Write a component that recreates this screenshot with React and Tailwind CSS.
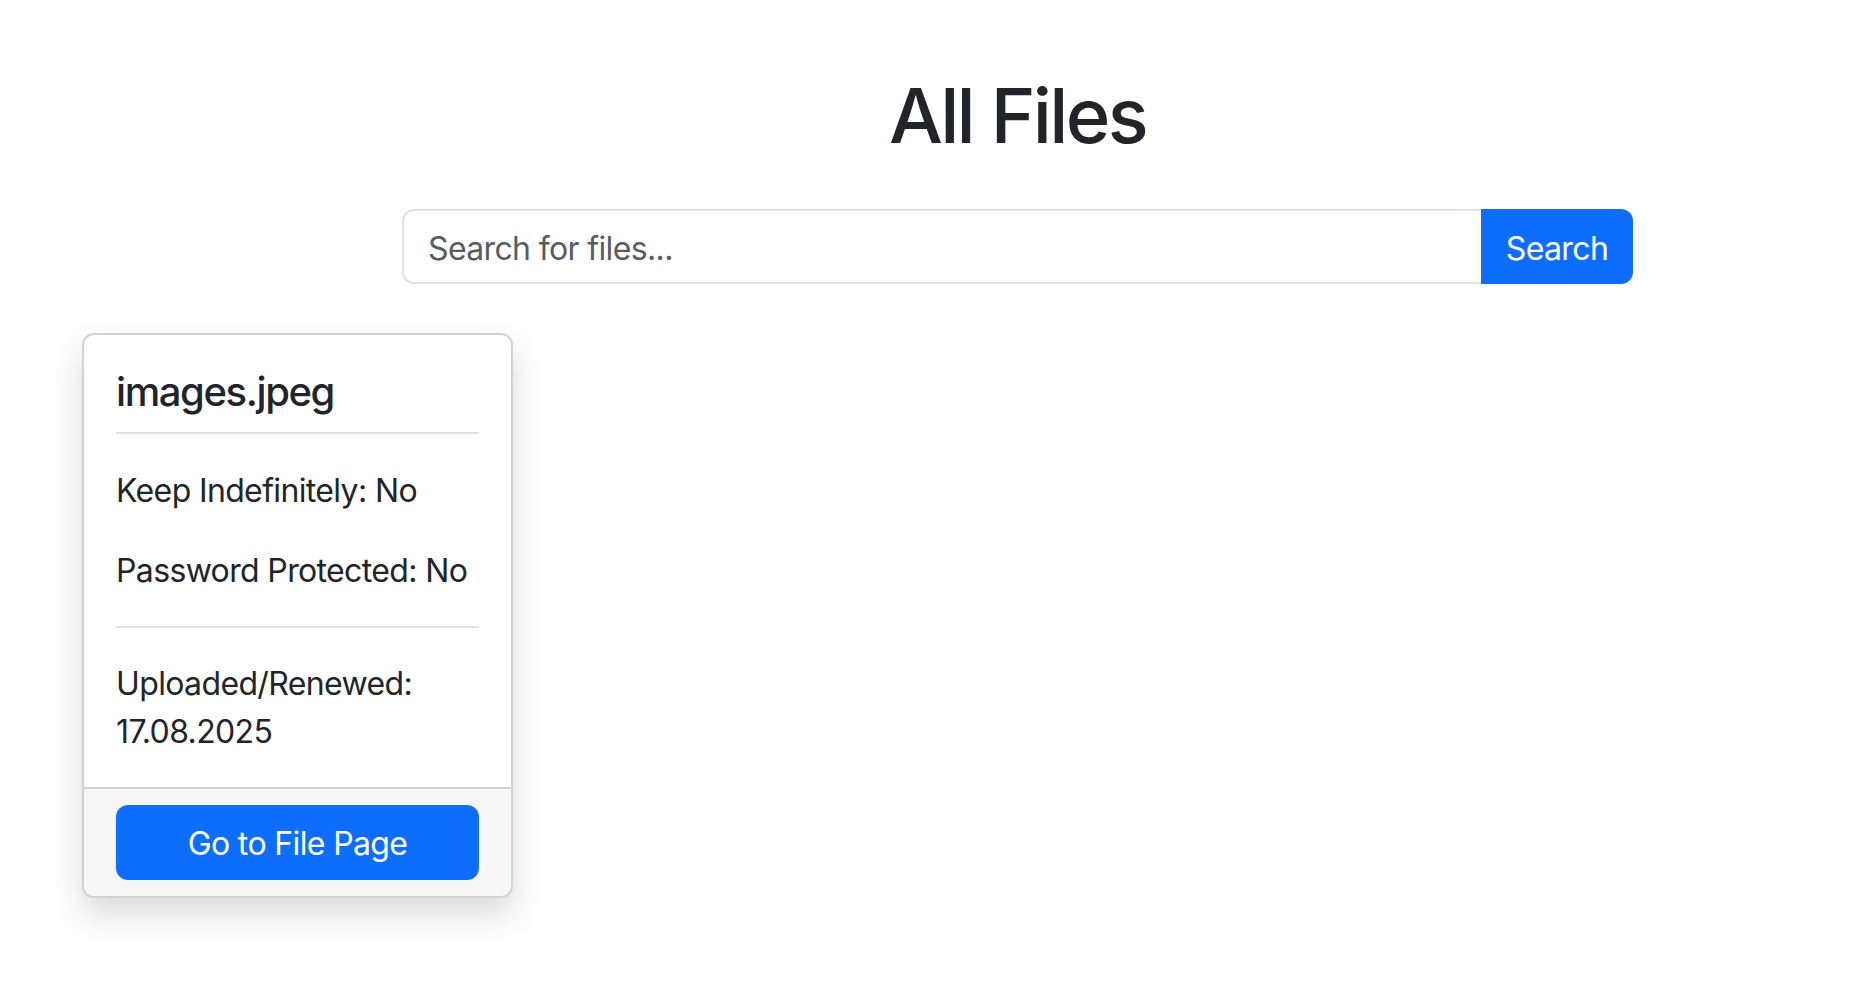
const FONT = { fontFamily: 'Inter, "Noto Sans", sans-serif' };

const FileCard = ({ file }) => (
  <div className="w-[431px] bg-white border-2 border-[#d2d2d2] rounded-[12px] shadow-[0_16px_32px_rgba(0,0,0,0.15)] overflow-hidden">
    <div className="px-[32px] pt-[33px] pb-[31px]">
      <h5 className="text-[40px] leading-[48px] font-medium tracking-[-0.035em] mb-[16px]">{file.name}</h5>
      <hr className="border-0 border-t-2 border-[#dee2e6] mb-[33px]" />
      <p className="text-[32px] leading-[48px] tracking-[-0.02em] whitespace-nowrap mb-[32px]">
        Keep Indefinitely: {file.keep ? 'Yes' : 'No'}
      </p>
      <p className="text-[32px] leading-[48px] tracking-[-0.02em] whitespace-nowrap mb-[31px]">
        Password Protected: {file.password ? 'Yes' : 'No'}
      </p>
      <hr className="border-0 border-t-2 border-[#dee2e6] mb-[32px]" />
      <p className="text-[32px] leading-[48px] tracking-[-0.02em]">Uploaded/Renewed: {file.uploaded}</p>
    </div>
    <div className="bg-[#f7f7f7] border-t-2 border-[#d2d2d2] px-[32px] py-[16px]">
      <button className="w-full h-[75px] pt-[3px] bg-[#0d6efd] text-white text-[32px] tracking-[-0.02em] rounded-[12px]">
        Go to File Page
      </button>
    </div>
  </div>
);

const files = [{ name: 'images.jpeg', keep: false, password: false, uploaded: '17.08.2025' }];

export default function App() {
  return (
    <div className="min-h-screen bg-white text-[#212529]" style={FONT}>
      <div className="ml-[402px] w-[1231px] pt-[67px]">
        <h1 className="text-[76px] leading-[96px] font-medium tracking-[-0.035em] text-center">All Files</h1>
        <div className="flex mt-[46px] h-[75px]">
          <input
            type="text"
            placeholder="Search for files..."
            className="flex-1 min-w-0 border-2 border-r-0 border-[#dee2e6] rounded-l-[12px] px-[24px] pt-[4px] text-[32px] tracking-[-0.02em] placeholder:text-[#595c5f] outline-none"
          />
          <button className="w-[152px] pt-[4px] bg-[#0d6efd] text-white text-[32px] tracking-[-0.02em] rounded-r-[12px]">
            Search
          </button>
        </div>
      </div>
      <div className="flex gap-[32px] pl-[82px] mt-[49px]">
        {files.map(f => (
          <FileCard key={f.name} file={f} />
        ))}
      </div>
    </div>
  );
}
